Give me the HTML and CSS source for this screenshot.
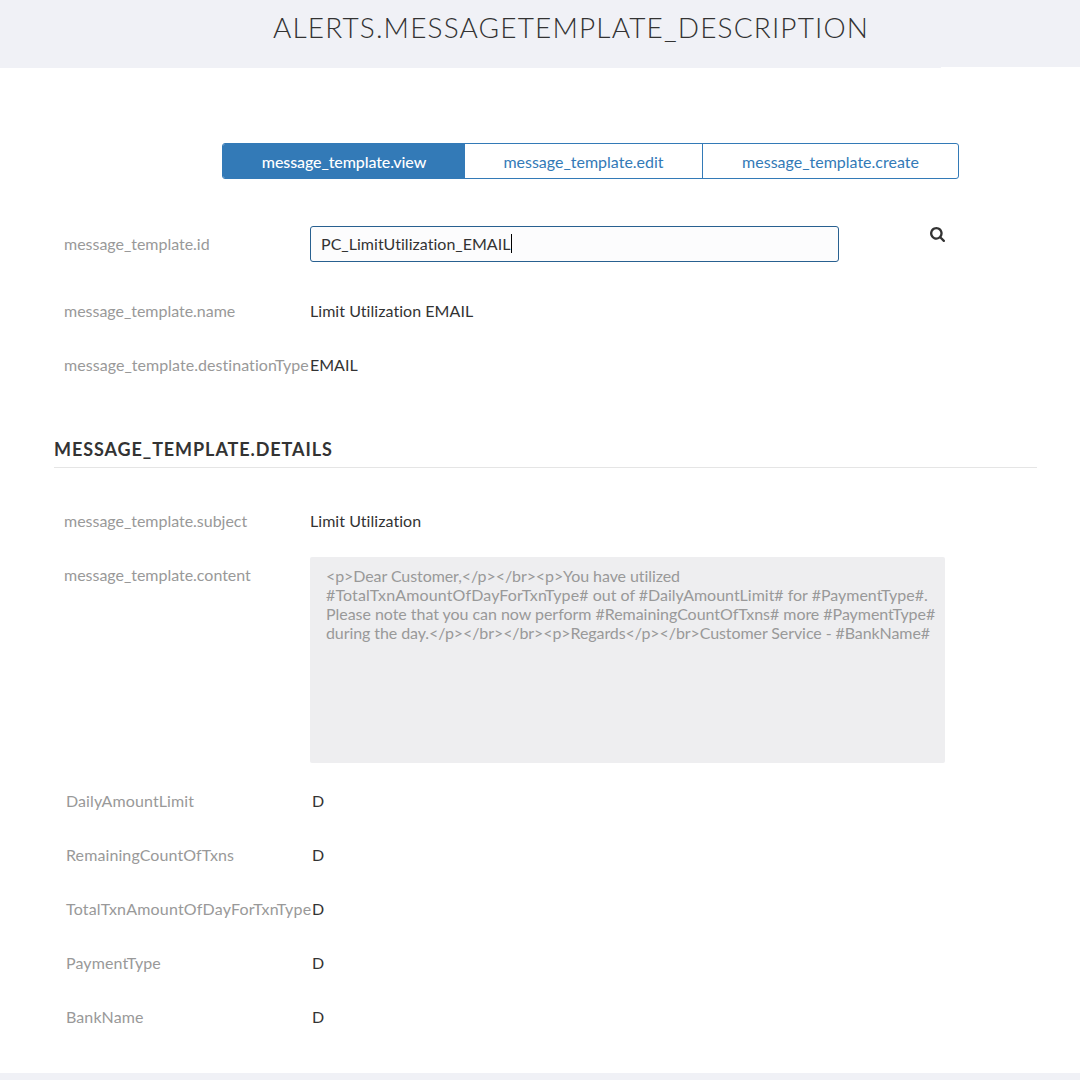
FILE: index.html
```html
<!DOCTYPE html>
<html lang="en">
<head>
<meta charset="utf-8">
<title>Message template</title>
<link rel="stylesheet" href="styles.css">
</head>
<body>
<header class="page-header"><h1>ALERTS.MESSAGETEMPLATE_DESCRIPTION</h1></header>
<main class="panel">
  <nav class="tabs">
    <a class="tab tab-view active">message_template.view</a>
    <a class="tab tab-edit">message_template.edit</a>
    <a class="tab tab-create">message_template.create</a>
  </nav>
  <section class="summary">
    <div class="row search-row">
      <span class="label">message_template.id</span>
      <div class="field"><span>PC_LimitUtilization_EMAIL</span><i class="caret"></i></div>
      <svg class="search" viewBox="0 0 1664 1664" width="15" height="15"><path d="M1152 704q0-185-131.500-316.500T704 256 387.500 387.500 256 704t131.500 316.500T704 1152t316.500-131.500T1152 704zm512 832q0 52-38 90t-90 38q-54 0-90-38l-343-342q-179 124-399 124-143 0-273.500-55.500t-225-150-150-225T0 704t55.500-273.500 150-225 225-150T704 0t273.500 55.500 225 150 150 225T1408 704q0 220-124 399l343 343q37 37 37 90z"/></svg>
    </div>
    <div class="row"><span class="label">message_template.name</span><span class="value">Limit Utilization EMAIL</span></div>
    <div class="row"><span class="label destination">message_template.destinationType</span><span>EMAIL</span></div>
  </section>
  <h2>MESSAGE_TEMPLATE.DETAILS</h2>
  <section class="details">
    <div class="row"><span class="label">message_template.subject</span><span class="value">Limit Utilization</span></div>
    <div class="row content-row"><span class="label">message_template.content</span>
      <div class="content">
        <div class="line tight">&lt;p&gt;Dear Customer,&lt;/p&gt;&lt;/br&gt;&lt;p&gt;You have utilized</div>
        <div class="line loose"><span class="token">#TotalTxnAmountOfDayForTxnType#</span> out of #DailyAmountLimit# for #PaymentType#.</div>
        <div class="line snug">Please note that you can now perform #RemainingCountOfTxns# more #PaymentType#</div>
        <div class="line tight">during the day.&lt;/p&gt;&lt;/br&gt;&lt;/br&gt;&lt;p&gt;Regards&lt;/p&gt;&lt;/br&gt;Customer Service - #BankName#</div>
      </div>
    </div>
  </section>
  <section class="attributes">
    <div class="row"><span class="label">DailyAmountLimit</span><span>D</span></div>
    <div class="row"><span class="label">RemainingCountOfTxns</span><span>D</span></div>
    <div class="row"><span class="label wide">TotalTxnAmountOfDayForTxnType</span><span>D</span></div>
    <div class="row"><span class="label">PaymentType</span><span>D</span></div>
    <div class="row"><span class="label">BankName</span><span>D</span></div>
  </section>
</main>
</body>
</html>
```
FILE: styles.css
```css
* { box-sizing: border-box; }
body { margin: 0; height: 1080px; overflow: hidden; background: #f0f1f6; color: #333; font: 16px/20px Lato, sans-serif; font-variant-ligatures: none; }
.page-header { height: 68px; padding: 7px 0 0 273px; background: linear-gradient(#fff, #fff) right bottom / 139px 1px no-repeat; }
h1 { margin: 0; font-size: 28px; line-height: 40px; font-weight: 300; letter-spacing: 1.15px; white-space: nowrap; }
.panel { height: 1005px; background: #fff; padding: 75px 43px 0 54px; }
.tabs { display: flex; width: 737px; height: 36px; margin-left: 168px; border: 1px solid #337ab7; border-radius: 3px; overflow: hidden; }
.tab { color: #337ab7; line-height: 36px; text-align: center; border-right: 1px solid #337ab7; }
.tab-view { width: 242px; }
.tab-edit { width: 238px; }
.tab-create { flex: 1; border: 0; }
.active { background: #337ab7; color: #fff; font-weight: 500; letter-spacing: -0.1px; padding-left: 1px; }
.summary { padding: 47px 0 0 10px; }
.row { display: flex; height: 54px; line-height: 20px; white-space: nowrap; }
.label { width: 246px; flex: none; color: #999; letter-spacing: -0.02px; }
.destination { letter-spacing: 0.05px; }
.search-row { height: 75px; }
.search-row .label { padding-top: 8px; }
.field { display: flex; width: 529px; height: 36px; padding: 7px 10px; border: 1px solid #286090; border-radius: 3px; background: #fcfcfd; letter-spacing: 0.03px; }
.caret { width: 1px; height: 19px; background: #000; }
.search { margin: 1px 0 0 91px; fill: #333; }
h2 { height: 32px; margin: 27px 0 0; border-bottom: 1px solid #e5e5e5; font-size: 18px; line-height: 27px; letter-spacing: 0.92px; font-weight: 700; }
.details { padding: 43px 0 0 10px; }
.value { letter-spacing: 0.05px; }
.content-row { height: 226px; }
.content { width: 635px; height: 206px; margin-top: -8px; padding: 9px 16px; background: #eeeef0; color: #999; line-height: 19px; border-radius: 2px; }
.tight { letter-spacing: -0.085px; }
.snug { letter-spacing: -0.04px; }
.loose { letter-spacing: -0.01px; }
.token { letter-spacing: 0.14px; }
.attributes { padding: 0 0 0 12px; }
.attributes .label { letter-spacing: 0.1px; }
.attributes .wide { letter-spacing: 0.19px; }
```
